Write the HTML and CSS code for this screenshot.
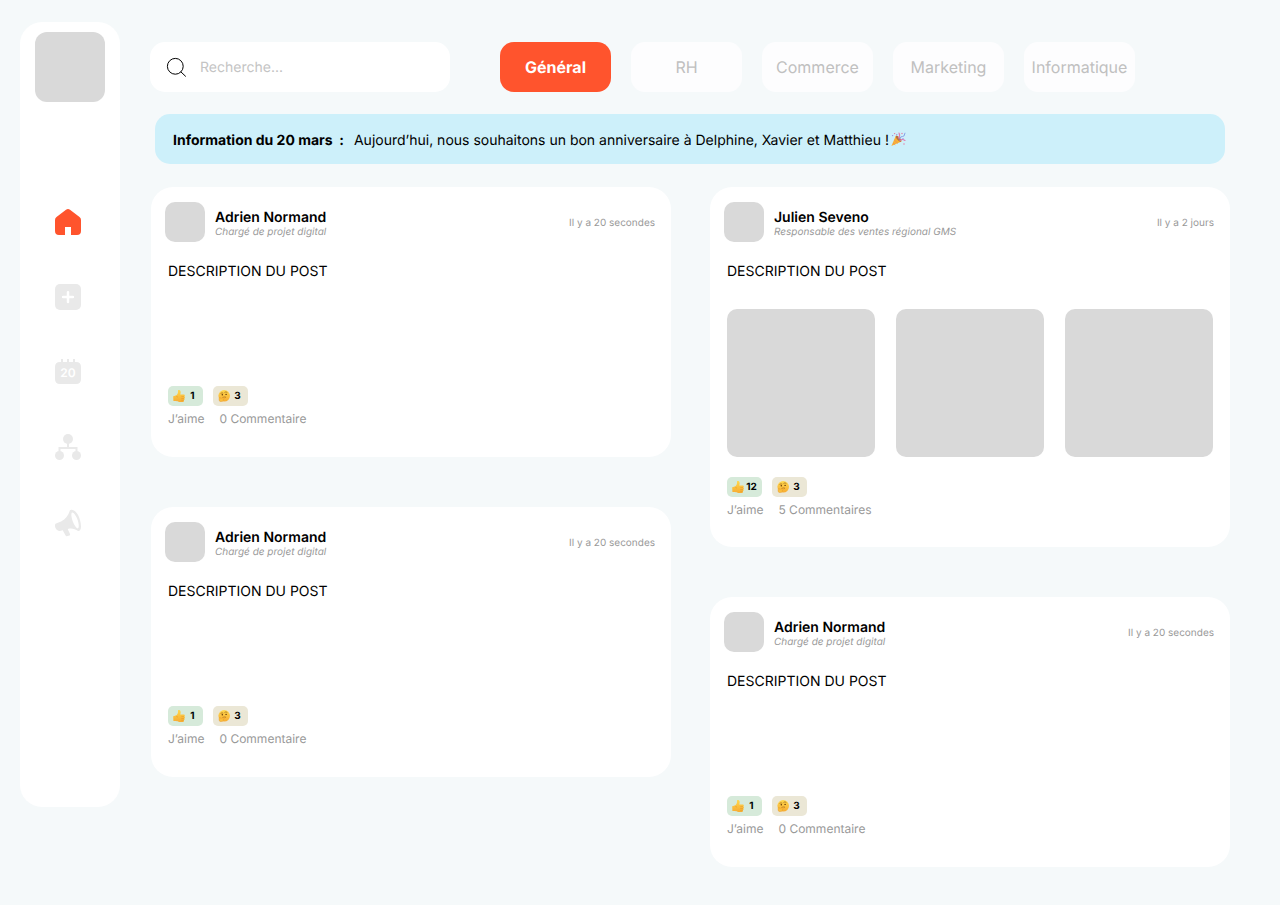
FILE: index.html
```html
<!DOCTYPE html>
<html lang="fr">
<head>
<meta charset="utf-8">
<meta name="viewport" content="width=device-width, initial-scale=1">
<title>Actualités</title>
<link rel="stylesheet" href="styles.css">
</head>
<body>
<svg class="defs" aria-hidden="true">
  <linearGradient id="skin" x1="0" y1="0" x2="0" y2="1"><stop offset="0" stop-color="#ffd84e"/><stop offset="1" stop-color="#f7ac33"/></linearGradient>
  <symbol id="thumb" viewBox="0 0 12 12">
    <path fill="url(#skin)" d="M.2 6.200 3 5.600C4.600 4.600 5.200 3 5 .8 5-.5 7-.5 7.500 1.300c.3 1.100.1 2.200-.3 3.300h3.300c1.400 0 1.700 1.500.8 2 .9.500.8 1.600 0 2 .5.600.3 1.500-.4 1.700.2 1-.4 1.700-1.300 1.700H6.500c-1.500 0-2.500-.4-3.300-.9L.4 11z"/>
    <path fill="none" stroke="#dc8c22" stroke-width=".4" d="M8.300 6.600h2.700M8.300 8.500h2.700M8.300 10.300h2.300M3 5.800c.7.900 1.200 1.300 1.900 1.300"/>
  </symbol>
  <symbol id="thinking" viewBox="0 0 12 12">
    <circle cx="6.200" cy="5.800" r="5.800" fill="url(#skin)"/>
    <path fill="none" stroke="#8a5210" stroke-width=".6" stroke-linecap="round" d="M2.900 3.200q1-.8 2-.2M6.800 2.200q1.200-1 2.300.1M4.900 7.300q1.400-.6 2.800-.2"/>
    <circle cx="4.300" cy="4.800" r=".7" fill="#5a3208"/><circle cx="8.100" cy="4.400" r=".7" fill="#5a3208"/>
    <path fill="#fbbd3c" stroke="#dd9026" stroke-width=".3" d="M1.600 7.300c.7-.4 1 .3 1 1.200l3.500-1c.9-.2 1.100.7.300 1l-1.500.6c1 .2.8 1.500 0 1.900-1.300.9-3 .9-3.700-.3-.5-1-.1-2.800.4-3.400z"/>
  </symbol>
</svg>
<div class="app">
  <aside class="sidebar">
    <div class="logo"></div>
    <nav class="menu" aria-label="Navigation">
      <a class="menu-link active" href="#" aria-label="Accueil">
        <svg viewBox="0 0 26 26"><path fill="currentColor" d="M11 .8Q13-.7 15 .8L24.500 8Q26 9.200 26 11v11q0 4-4 4h-6v-8h-6v8H4q-4 0-4-4V11Q0 9.200 1.500 8z"/></svg>
      </a>
      <a class="menu-link" href="#" aria-label="Ajouter">
        <svg viewBox="0 0 26 26"><rect width="26" height="26" rx="5" fill="currentColor"/><path stroke="#fff" stroke-width="2.500" stroke-linecap="round" d="M13 8.200v9.800M8.100 13.100h9.800"/></svg>
      </a>
      <a class="menu-link" href="#" aria-label="Calendrier">
        <svg viewBox="0 0 26 26"><path fill="currentColor" d="M6 0h2v3h4V0h2v3h4V0h2v3h1q5 0 5 5v12q0 5-5 5H5q-5 0-5-5V8q0-5 5-5h1z"/><text class="day" x="13" y="18" text-anchor="middle">20</text></svg>
      </a>
      <a class="menu-link" href="#" aria-label="Organisation">
        <svg viewBox="0 0 26 26"><g fill="currentColor"><circle cx="13" cy="5" r="5"/><circle cx="4.500" cy="21.500" r="4.500"/><circle cx="21.500" cy="21.500" r="4.500"/></g><path fill="none" stroke="currentColor" stroke-width="2" d="M13 9v5M4.500 18v-4h17v4"/></svg>
      </a>
      <a class="menu-link" href="#" aria-label="Annonces">
        <svg viewBox="0 -1 26 26"><path fill="currentColor" fill-rule="evenodd" d="M16.200-.3C21-1 26 8 26 16.500c0 3-1.200 4.800-3 4.500-2.500-2-6-2.900-9.500-2.200l-.8.200 2.300 4.900c.3.700 0 1.200-.6 1.500l-2.400.8c-.6.200-1 0-1.400-.6l-2.900-5.300-2.700.6C2 21.500-.4 17.500 0 15c.2-1 .8-1.400 1.600-1.700l4.500-1.900C10.500 9 13.500 5 14.500 1.400c.2-1 .8-1.600 1.700-1.700zM17 2.600c-1.200.9-.6 5.200 1 9.400 1.600 4 4.100 7 5.100 6.300 1.300-1 .6-5.800-1-9.800-1.500-3.600-4-6.700-5.100-5.900z"/></svg>
      </a>
    </nav>
  </aside>

  <main class="main">
    <header class="topbar">
      <form class="search" role="search">
        <svg class="search-icon" viewBox="0 0 20 20" aria-hidden="true"><circle cx="9.300" cy="9.300" r="7.900"/><path d="m14.800 14.800 5 4.700"/></svg>
        <input type="search" placeholder="Recherche..." aria-label="Recherche">
      </form>
      <div class="tabs">
        <button class="tab selected" type="button">Général</button>
        <button class="tab" type="button">RH</button>
        <button class="tab" type="button">Commerce</button>
        <button class="tab" type="button">Marketing</button>
        <button class="tab" type="button">Informatique</button>
      </div>
    </header>

    <section class="banner">
      <strong>Information du 20 mars&nbsp; :</strong>
      <span class="banner-text">Aujourd’hui, nous souhaitons un bon anniversaire à Delphine, Xavier et Matthieu !</span>
      <svg class="party" viewBox="0 0 15 15" aria-hidden="true">
        <path fill="#f9b233" d="M.4 14 5 3.500q4 1.500 5.500 6z"/>
        <path fill="none" stroke="#e8925a" stroke-width=".9" d="m3.200 8 3.600 3.400M2 11l2.200 1.800"/>
        <ellipse cx="7.600" cy="6.700" rx="1.500" ry="3.700" fill="#b9703c" transform="rotate(-43 7.600 6.700)"/>
        <path fill="none" stroke="#e27aae" stroke-width="1.100" stroke-linecap="round" d="M7.500 6q2-2 .5-5M9 8.500q2-2 5 0"/>
        <path fill="none" stroke="#86a0e6" stroke-width="1" stroke-linecap="round" d="M8.500 7q1-3 3-2.500T14 1.200"/>
        <g fill="#e8749c"><circle cx="3.600" cy="1.600" r=".7"/><circle cx="11" cy="1.500" r=".7"/><circle cx="13" cy="12" r=".7"/></g>
        <g fill="#9a8fe0"><circle cx="1.600" cy="3.600" r=".7"/><circle cx="12" cy="6.700" r=".7"/><circle cx="5.800" cy="2.700" r=".7"/></g>
      </svg>
    </section>

    <div class="feed">
      <div class="column">
        <article class="post">
          <header class="post-head">
            <div class="avatar"></div>
            <div class="author"><h2>Adrien Normand</h2><p>Chargé de projet digital</p></div>
            <time>Il y a 20 secondes</time>
          </header>
          <div class="post-body"><p>DESCRIPTION DU POST</p></div>
          <footer class="post-foot">
            <div class="reactions">
              <button class="reaction like" type="button" aria-label="J’aime : 1"><svg><use href="#thumb"/></svg><span>1</span></button>
              <button class="reaction think" type="button" aria-label="Perplexe : 3"><svg><use href="#thinking"/></svg><span>3</span></button>
            </div>
            <div class="actions"><button type="button">J’aime</button><button type="button">0 Commentaire</button></div>
          </footer>
        </article>
        <article class="post">
          <header class="post-head">
            <div class="avatar"></div>
            <div class="author"><h2>Adrien Normand</h2><p>Chargé de projet digital</p></div>
            <time>Il y a 20 secondes</time>
          </header>
          <div class="post-body"><p>DESCRIPTION DU POST</p></div>
          <footer class="post-foot">
            <div class="reactions">
              <button class="reaction like" type="button" aria-label="J’aime : 1"><svg><use href="#thumb"/></svg><span>1</span></button>
              <button class="reaction think" type="button" aria-label="Perplexe : 3"><svg><use href="#thinking"/></svg><span>3</span></button>
            </div>
            <div class="actions"><button type="button">J’aime</button><button type="button">0 Commentaire</button></div>
          </footer>
        </article>
      </div>
      <div class="column">
        <article class="post">
          <header class="post-head">
            <div class="avatar"></div>
            <div class="author"><h2>Julien Seveno</h2><p>Responsable des ventes régional GMS</p></div>
            <time>Il y a 2 jours</time>
          </header>
          <div class="post-body">
            <p>DESCRIPTION DU POST</p>
            <div class="gallery"><div class="photo"></div><div class="photo"></div><div class="photo"></div></div>
          </div>
          <footer class="post-foot">
            <div class="reactions">
              <button class="reaction like" type="button" aria-label="J’aime : 12"><svg><use href="#thumb"/></svg><span>12</span></button>
              <button class="reaction think" type="button" aria-label="Perplexe : 3"><svg><use href="#thinking"/></svg><span>3</span></button>
            </div>
            <div class="actions"><button type="button">J’aime</button><button type="button">5 Commentaires</button></div>
          </footer>
        </article>
        <article class="post">
          <header class="post-head">
            <div class="avatar"></div>
            <div class="author"><h2>Adrien Normand</h2><p>Chargé de projet digital</p></div>
            <time>Il y a 20 secondes</time>
          </header>
          <div class="post-body"><p>DESCRIPTION DU POST</p></div>
          <footer class="post-foot">
            <div class="reactions">
              <button class="reaction like" type="button" aria-label="J’aime : 1"><svg><use href="#thumb"/></svg><span>1</span></button>
              <button class="reaction think" type="button" aria-label="Perplexe : 3"><svg><use href="#thinking"/></svg><span>3</span></button>
            </div>
            <div class="actions"><button type="button">J’aime</button><button type="button">0 Commentaire</button></div>
          </footer>
        </article>
      </div>
    </div>
  </main>
</div>
</body>
</html>
```
FILE: styles.css
```css
* { box-sizing: border-box; }

body {
  margin: 0;
  background: #f5f9fa;
  color: #000;
  font-family: Inter, "Liberation Sans", sans-serif;
  font-size: 14px;
  line-height: 18px;
  text-rendering: geometricPrecision;
}

h2, p { margin: 0; }

button, input {
  border: 0;
  padding: 0;
  background: none;
  color: inherit;
  font: inherit;
  text-rendering: inherit;
}

button { cursor: pointer; }

.defs {
  position: absolute;
  width: 0;
  height: 0;
}

.app {
  display: flex;
  align-items: flex-start;
  gap: 30px;
  padding: 22px 50px 38px 20px;
}

/* Sidebar */
.sidebar {
  flex: 0 0 100px;
  min-height: calc(100vh - 120px);
  padding: 10px 15px;
  border-radius: 22px;
  background: #fff;
}

.logo {
  height: 70px;
  border-radius: 12px;
  background: #d9d9d9;
}

.menu {
  display: flex;
  flex-direction: column;
  gap: 49px;
  margin: 107px 0 0 20px;
}

.menu-link {
  width: 26px;
  height: 26px;
  color: #e9e9e9;
}

.menu-link.active { color: #ff542d; }

.menu-link svg {
  display: block;
  width: 26px;
  height: 26px;
  overflow: visible;
}

.day {
  fill: #fff;
  font-size: 12px;
  font-weight: 600;
}

/* Top bar */
.main {
  flex: 1;
  min-width: 0;
  padding-top: 20px;
}

.topbar {
  display: flex;
  flex-wrap: wrap;
  gap: 20px 50px;
}

.search {
  display: flex;
  align-items: center;
  gap: 14px;
  flex: 0 1 300px;
  height: 50px;
  padding: 0 16px;
  border-radius: 15px;
  background: #fff;
}

.search-icon {
  flex: none;
  width: 20px;
  height: 20px;
  overflow: visible;
  fill: none;
  stroke: #000;
  stroke-width: 1;
}

.search input {
  flex: 1;
  min-width: 0;
  padding-top: 2px;
  outline: 0;
}

.search input::placeholder {
  color: #c4c4c4;
  opacity: 1;
}

.tabs {
  display: flex;
  flex-wrap: wrap;
  gap: 20px;
}

.tab {
  width: 111px;
  height: 50px;
  border-radius: 14px;
  background: #fdfdfe;
  color: #c0c0c0;
  font-size: 16px;
}

.tab.selected {
  background: #ff542d;
  color: #fff;
  font-weight: 700;
}

/* Announcement */
.banner {
  display: flex;
  align-items: center;
  min-height: 50px;
  margin: 22px 5px 23px;
  padding: 3px 18px 0;
  border-radius: 15px;
  background: #cdf0fa;
}

.banner-text { margin-left: 10px; }

.party {
  flex: none;
  width: 15px;
  height: 15px;
  margin: 0 0 2px 2px;
}

/* Feed */
.feed {
  display: grid;
  grid-template-columns: repeat(auto-fit, minmax(400px, 1fr));
  align-items: start;
  gap: 50px 39px;
  padding-left: 1px;
}

.column {
  display: grid;
  gap: 50px;
}

.post {
  min-height: 270px;
  padding: 15px 17px 28px;
  border-radius: 22px;
  background: #fff;
}

.post-head {
  display: flex;
  align-items: center;
  gap: 10px;
  margin: 0 -1px 0 -3px;
}

.avatar {
  flex: none;
  width: 40px;
  height: 40px;
  border-radius: 10px;
  background: #d9d9d9;
}

.author {
  flex: 1;
  padding-top: 4px;
}

.author h2 {
  font-size: 14px;
  font-weight: 600;
  line-height: 16px;
}

.author p {
  color: #999;
  font-size: 10px;
  font-style: italic;
  line-height: 12px;
}

time {
  padding-top: 2px;
  color: #999;
  font-size: 10px;
}

.post-body {
  min-height: 124px;
  margin-top: 20px;
  line-height: 20px;
}

.gallery {
  display: grid;
  grid-template-columns: repeat(3, 1fr);
  gap: 21px;
  margin-top: 27px;
  padding-bottom: 20px;
}

.photo {
  aspect-ratio: 1;
  border-radius: 10px;
  background: #d9d9d9;
}

.reactions {
  display: flex;
  gap: 10px;
}

.reaction {
  display: flex;
  align-items: center;
  width: 35px;
  height: 20px;
  padding: 0 3px 0 5px;
  border-radius: 5px;
  font-size: 10px;
  font-weight: 700;
}

.reaction svg {
  flex: none;
  width: 12px;
  height: 12px;
}

.reaction span {
  flex: 1;
  text-align: center;
}

.like { background: #d6eada; }
.think { background: #ebe7d6; }

.actions {
  display: flex;
  gap: 15px;
  margin-top: 4px;
  color: #999;
  font-size: 12px;
}
```
